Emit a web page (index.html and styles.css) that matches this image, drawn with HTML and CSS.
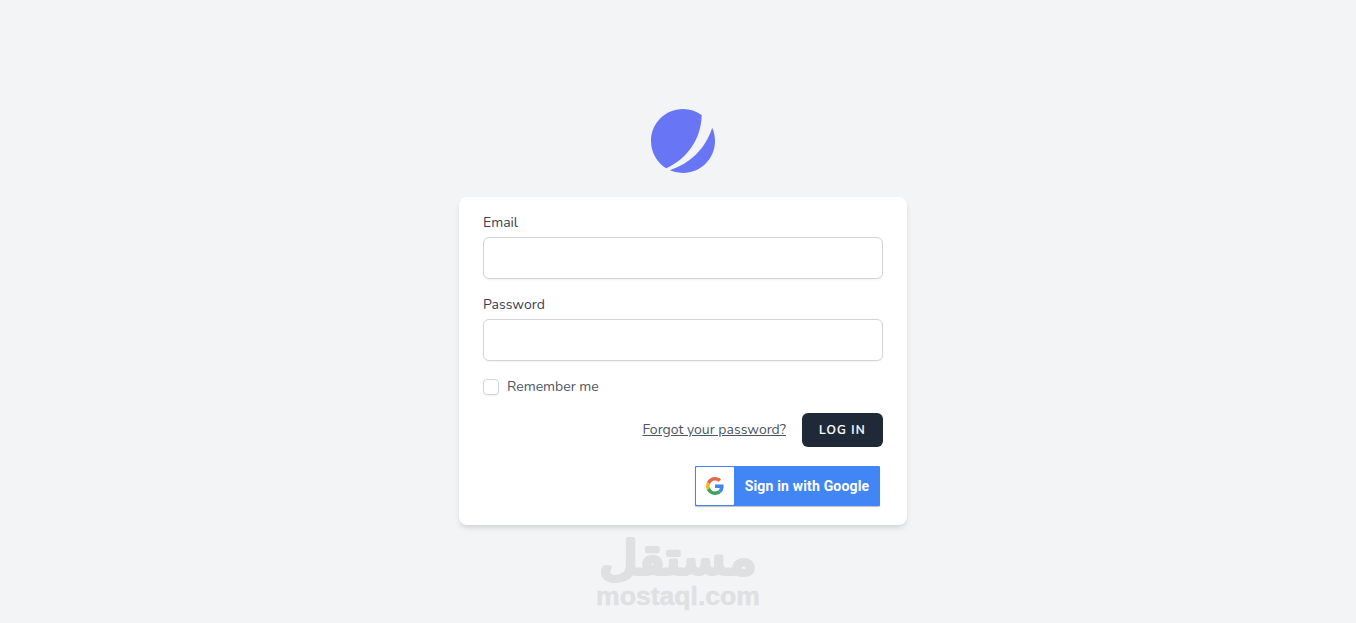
FILE: index.html
```
<!DOCTYPE html>
<html lang="en">
<head>
  <meta charset="UTF-8">
  <meta name="viewport" content="width=device-width, initial-scale=1.0">
  <title>Log in</title>
  <link rel="stylesheet" href="styles.css">
</head>
<body>
  <main class="page">
    <a class="logo" href="#">
      <svg viewBox="0 0 48 48" fill="#6875f5">
        <path d="M11.395 44.428C4.557 40.198 0 32.632 0 24 0 10.745 10.745 0 24 0a23.891 23.891 0 0113.997 4.502c-.2 17.907-11.097 33.245-26.602 39.926z"/>
        <path d="M14.134 45.885A23.914 23.914 0 0024 48c13.255 0 24-10.745 24-24 0-3.516-.756-6.856-2.115-9.866-4.659 15.143-16.608 27.092-31.75 31.751z"/>
      </svg>
    </a>

    <form class="card">
      <label class="label" for="email">Email</label>
      <input class="input" id="email" type="email">

      <label class="label label-password" for="password">Password</label>
      <input class="input" id="password" type="password">

      <label class="remember">
        <input class="checkbox" type="checkbox">
        <span>Remember me</span>
      </label>

      <div class="actions">
        <a class="forgot" href="#">Forgot your password?</a>
        <button class="login" type="button">Log in</button>
      </div>

      <a class="google" href="#">
        <span class="google-icon">
          <svg viewBox="0 0 48 48">
            <path fill="#de6a4e" d="M24 9.5c3.54 0 6.71 1.22 9.21 3.6l6.85-6.85C35.9 2.38 30.47 0 24 0 14.62 0 6.51 5.38 2.56 13.22l7.98 6.19C12.43 13.72 17.74 9.5 24 9.5z"/>
            <path fill="#4285f4" d="M46.98 24.55c0-1.57-.15-3.09-.38-4.55H24v9.02h12.94c-.58 2.96-2.26 5.48-4.78 7.18l7.73 6c4.51-4.18 7.09-10.36 7.09-17.65z"/>
            <path fill="#f4b720" d="M10.53 28.59c-.48-1.45-.76-2.99-.76-4.59s.27-3.14.76-4.59l-7.98-6.19C.92 16.46 0 20.12 0 24c0 3.88.92 7.54 2.56 10.78l7.97-6.19z"/>
            <path fill="#3ca45a" d="M24 48c6.48 0 11.93-2.13 15.89-5.81l-7.73-6c-2.15 1.45-4.92 2.3-8.16 2.3-6.26 0-11.57-4.22-13.47-9.91l-7.98 6.19C6.51 42.62 14.62 48 24 48z"/>
          </svg>
        </span>
        <span class="google-text">Sign in with Google</span>
      </a>
    </form>

    <svg class="watermark" viewBox="0 0 166 80">
      <text class="mark-ar" x="83" y="40" text-anchor="middle" textLength="157" lengthAdjust="spacingAndGlyphs" direction="rtl">مستقل</text>
      <text class="mark-en" x="1" y="71" textLength="164" lengthAdjust="spacingAndGlyphs">mostaql.com</text>
    </svg>
  </main>
</body>
</html>
```
FILE: styles.css
```
* {
  box-sizing: border-box;
}

body {
  margin: 0;
  background: #f3f4f6;
  color: #4b5563;
  font-family: Nunito, Lato, sans-serif;
  font-size: 14px;
  line-height: 20px;
  overflow: hidden;
}

.page {
  display: flex;
  flex-direction: column;
  align-items: center;
  height: 100vh;
  padding: 109px 0 0 10px;
}

.logo svg {
  display: block;
  width: 64px;
  height: 64px;
}

.card {
  width: 448px;
  height: 328px;
  flex: none;
  margin-top: 24px;
  padding: 16px 24px;
  background: #fff;
  border-radius: 8px;
  box-shadow: 0 4px 6px -1px rgba(0, 0, 0, 0.1), 0 2px 4px -1px rgba(0, 0, 0, 0.06);
}

.label {
  display: block;
  color: #374151;
}

.label-password {
  margin-top: 16px;
}

.input {
  display: block;
  width: 100%;
  height: 42px;
  margin-top: 4px;
  padding: 8px 12px;
  border: 1px solid #d1d5db;
  border-radius: 6px;
  background: #fff;
  box-shadow: 0 1px 2px rgba(0, 0, 0, 0.05);
}

.remember {
  display: flex;
  align-items: center;
  gap: 8px;
  height: 20px;
  margin-top: 16px;
}

.checkbox {
  appearance: none;
  width: 16px;
  height: 16px;
  margin: 0;
  border: 1px solid #d1d5db;
  border-radius: 4px;
  background: #fff;
  box-shadow: 0 1px 2px rgba(0, 0, 0, 0.05);
}

.actions {
  display: flex;
  align-items: center;
  justify-content: flex-end;
  gap: 16px;
  margin-top: 16px;
}

.forgot {
  color: #4b5563;
}

.login {
  width: 81px;
  height: 34px;
  padding: 0;
  border: 0;
  border-radius: 6px;
  background: #1f2937;
  color: #fff;
  font-family: inherit;
  font-size: 12px;
  font-weight: 600;
  letter-spacing: 1.2px;
  text-transform: uppercase;
  -webkit-text-stroke: 0.2px #fff;
}

.google {
  display: flex;
  width: 185px;
  height: 40px;
  margin: 19px 3px 0 auto;
  padding: 1px;
  border-radius: 1px;
  background: #4285f4;
  box-shadow: 0 1px 1px rgba(0, 0, 0, 0.25);
  color: #fff;
  font-family: Roboto, sans-serif;
  font-size: 14px;
  font-weight: 700;
  letter-spacing: 0.17px;
  text-decoration: none;
}

.google-icon {
  display: flex;
  align-items: center;
  justify-content: center;
  width: 38px;
  background: #fff;
  border-radius: 1px;
}

.google-icon svg {
  width: 18px;
  height: 18px;
}

.google-text {
  flex: 1;
  padding-left: 1px;
  line-height: 38px;
  text-align: center;
  white-space: nowrap;
}

.watermark {
  flex: none;
  width: 166px;
  height: 80px;
  margin: 9px 10px 0 0;
  fill: #dfe0e2;
  overflow: visible;
}

.mark-ar {
  font-family: "DejaVu Sans", sans-serif;
  font-size: 46px;
  font-weight: 400;
  stroke: #dfe0e2;
  stroke-width: 4;
  stroke-linejoin: round;
}

.mark-en {
  font-family: "Liberation Sans", sans-serif;
  font-size: 26px;
  font-weight: 700;
  stroke: #dfe0e2;
  stroke-width: 0.4;
  stroke-linejoin: round;
}
```
